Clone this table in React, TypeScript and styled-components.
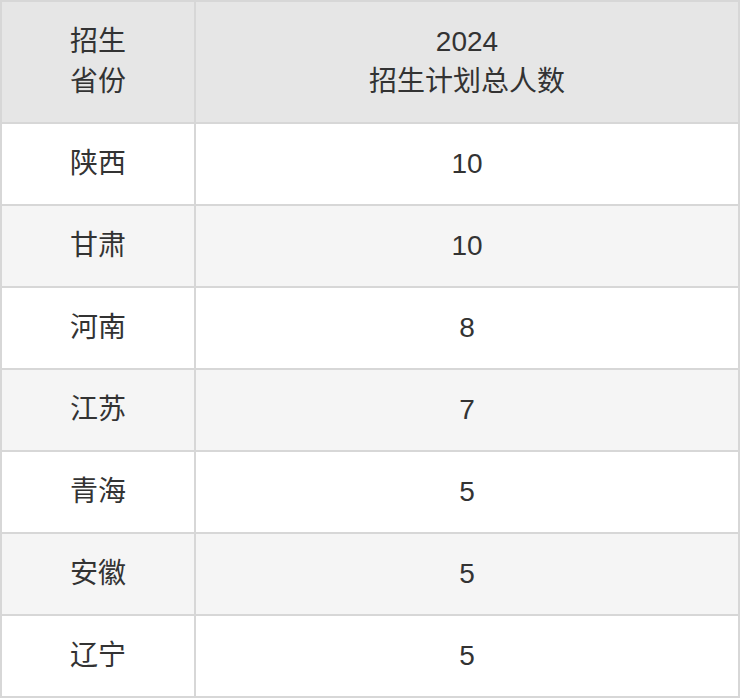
import styled, { createGlobalStyle } from "styled-components";

const GlobalStyle = createGlobalStyle`
  html, body {
    margin: 0;
    padding: 0;
    background: #ffffff;
  }
  body {
    font-family: "Liberation Sans", "Noto Sans CJK SC", sans-serif;
    color: #333333;
  }
`;

const Table = styled.table`
  width: 740px;
  border-collapse: collapse;
  table-layout: fixed;
  font-size: 28px;
  line-height: 40px;
`;

const HeadCell = styled.th`
  height: 120px;
  padding: 0;
  background: #e6e6e6;
  border: 2px solid #d7d7d7;
  font-weight: normal;
  text-align: center;
  vertical-align: middle;
`;

const Row = styled.tr<{ $alt: boolean }>`
  background: ${(p) => (p.$alt ? "#f5f5f5" : "#ffffff")};
`;

const Cell = styled.td`
  height: 80px;
  padding: 0;
  border: 2px solid #d7d7d7;
  text-align: center;
  vertical-align: middle;
`;

const rows = [
  ["陕西", "10"],
  ["甘肃", "10"],
  ["河南", "8"],
  ["江苏", "7"],
  ["青海", "5"],
  ["安徽", "5"],
  ["辽宁", "5"],
];

export default function App() {
  return (
    <>
      <GlobalStyle />
      <Table>
        <colgroup>
          <col style={{ width: 194 }} />
          <col />
        </colgroup>
        <thead>
          <tr>
            <HeadCell>
              招生
              <br />
              省份
            </HeadCell>
            <HeadCell>
              2024
              <br />
              招生计划总人数
            </HeadCell>
          </tr>
        </thead>
        <tbody>
          {rows.map(([name, count], i) => (
            <Row key={name} $alt={i % 2 === 1}>
              <Cell>{name}</Cell>
              <Cell>{count}</Cell>
            </Row>
          ))}
        </tbody>
      </Table>
    </>
  );
}
